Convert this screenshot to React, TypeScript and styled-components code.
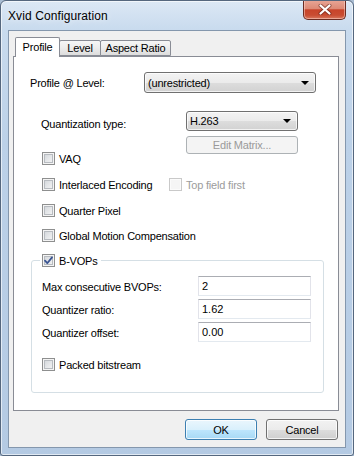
import React from "react";
import styled, { createGlobalStyle } from "styled-components";

const GlobalStyle = createGlobalStyle`
  html, body { margin: 0; padding: 0; background: #a9bdd3; }
  body { font-family: "Liberation Sans", Arial, sans-serif; font-size: 11px; color: #000; }
  * { box-sizing: border-box; }
`;

const Window = styled.div`
  width: 354px;
  height: 456px;
  display: flex;
  flex-direction: column;
  background: linear-gradient(180deg, #dce8f5 0px, #c9dbee 28px, #bcd1e8 140px, #b4cae3 456px);
  border: 1px solid #55677e;
  border-radius: 6px 6px 3px 3px;
  overflow: hidden;
  box-shadow: inset 0 0 0 1px rgba(255, 255, 255, 0.6);
`;

const TitleBar = styled.div`
  height: 29px;
  flex: none;
  display: flex;
  align-items: center;
  padding-left: 7px;
`;

const Title = styled.span`
  font-size: 12px;
  letter-spacing: 0.1px;
  color: #000;
  text-shadow: 0 0 6px rgba(255, 255, 255, 0.9);
`;

const CloseButton = styled.div`
  margin-left: auto;
  margin-right: 7px;
  align-self: flex-start;
  margin-top: -1px;
  width: 43px;
  height: 20px;
  display: flex;
  align-items: center;
  justify-content: center;
  border: 1px solid #6b2c22;
  border-top: none;
  border-radius: 0 0 5px 5px;
  background: linear-gradient(180deg, #e9a797 0%, #dd8a76 45%, #c8442a 52%, #c94d32 80%, #d8785e 100%);
  box-shadow: inset 0 0 0 1px rgba(255, 220, 210, 0.5);
`;

const Client = styled.div`
  flex: 1;
  margin: 0 7px 7px 7px;
  background: #f0f0f0;
  border: 1px solid #8497ad;
  display: flex;
  flex-direction: column;
  padding: 6px 7px 0 4px;
`;

const TabStrip = styled.div`
  height: 19px;
  display: flex;
  align-items: flex-end;
  padding-left: 2px;
`;

const Tab = styled.div<{ $active?: boolean; $w: number }>`
  width: ${(p) => p.$w}px;
  height: ${(p) => (p.$active ? 20 : 16)}px;
  margin-bottom: ${(p) => (p.$active ? -1 : 0)}px;
  margin-left: ${(p) => (p.$active ? 0 : -1)}px;
  position: relative;
  z-index: ${(p) => (p.$active ? 1 : 0)};
  border: 1px solid #898c95;
  border-bottom: ${(p) => (p.$active ? "none" : "1px solid #898c95")};
  border-radius: 2px 2px 0 0;
  background: ${(p) =>
    p.$active ? "#ffffff" : "linear-gradient(180deg, #f6f6f6 0%, #ececec 50%, #dddddd 100%)"};
  display: flex;
  align-items: center;
  justify-content: center;
  padding-bottom: ${(p) => (p.$active ? 1 : 0)}px;
  white-space: nowrap;
  letter-spacing: -0.2px;
`;

const Panel = styled.div`
  width: 326px;
  height: 355px;
  background: #fff;
  border: 1px solid #898c95;
  display: flex;
  flex-direction: column;
`;

const Row = styled.div<{ $top: number; $left: number }>`
  display: flex;
  align-items: center;
  margin-top: ${(p) => p.$top}px;
  padding-left: ${(p) => p.$left}px;
`;

const Label = styled.span<{ $w: number; $dy?: number }>`
  width: ${(p) => p.$w}px;
  flex: none;
  white-space: nowrap;
  letter-spacing: -0.2px;
  padding-top: ${(p) => p.$dy ?? 0}px;
`;

const QuantRow = styled.div`
  display: flex;
  align-items: flex-start;
  margin-top: 18px;
  padding-left: 27px;
`;

const Stack = styled.div`
  display: flex;
  flex-direction: column;
  gap: 5px;
`;

const Combo = styled.div<{ $w: number; $h: number }>`
  width: ${(p) => p.$w}px;
  height: ${(p) => p.$h}px;
  border: 1px solid #707070;
  border-radius: 3px;
  background: linear-gradient(180deg, #f3f3f3 0%, #ebebeb 50%, #dddddd 51%, #d2d2d2 100%);
  box-shadow: inset 0 0 0 1px rgba(255, 255, 255, 0.7);
  display: flex;
  align-items: center;
  padding: 0 6px 0 3px;
  letter-spacing: -0.2px;
`;

const ComboText = styled.span`
  flex: 1;
`;

const Arrow = styled.span`
  width: 0;
  height: 0;
  border-left: 4px solid transparent;
  border-right: 4px solid transparent;
  border-top: 4px solid #000;
`;

const PushButton = styled.div<{ $w: number; $h: number; $variant: "default" | "normal" | "disabled" }>`
  width: ${(p) => p.$w}px;
  height: ${(p) => p.$h}px;
  border-radius: 3px;
  display: flex;
  align-items: center;
  justify-content: center;
  letter-spacing: -0.2px;
  border: 1px solid
    ${(p) => (p.$variant === "default" ? "#3c7fb1" : p.$variant === "disabled" ? "#adb2b5" : "#707070")};
  color: ${(p) => (p.$variant === "disabled" ? "#9a9a9a" : "#000")};
  background: ${(p) =>
    p.$variant === "default"
      ? "linear-gradient(180deg, #eaf6fd 0%, #d9f0fc 50%, #bee6fd 51%, #a7d9f5 100%)"
      : p.$variant === "disabled"
      ? "#f4f4f4"
      : "linear-gradient(180deg, #f2f2f2 0%, #ebebeb 50%, #dddddd 51%, #cfcfcf 100%)"};
  box-shadow: ${(p) =>
    p.$variant === "disabled" ? "none" : "inset 0 0 0 1px rgba(255, 255, 255, 0.75)"};
`;

const CheckRow = styled.div<{ $top: number }>`
  display: flex;
  align-items: center;
  margin-top: ${(p) => p.$top}px;
  padding-left: 28px;
  height: 13px;
`;

const CheckItem = styled.label<{ $w?: number; $disabled?: boolean }>`
  display: flex;
  align-items: center;
  gap: 4px;
  width: ${(p) => (p.$w ? `${p.$w}px` : "auto")};
  flex: none;
  white-space: nowrap;
  letter-spacing: -0.2px;
  color: ${(p) => (p.$disabled ? "#9c9c9c" : "#000")};
`;

const Box = styled.span<{ $disabled?: boolean }>`
  width: 13px;
  height: 13px;
  flex: none;
  display: flex;
  align-items: center;
  justify-content: center;
  border: 1px solid ${(p) => (p.$disabled ? "#c9c9c9" : "#8e8f8f")};
  background: ${(p) =>
    p.$disabled ? "#f5f5f5" : "linear-gradient(135deg, #cdd1d6 0%, #e6e8ea 55%, #f7f7f7 100%)"};
  box-shadow: ${(p) =>
    p.$disabled
      ? "inset 0 0 0 1px #fbfbfb"
      : "inset 0 0 0 1px #f4f4f4, inset 0 0 0 2px #b7bbc0"};
`;

const Group = styled.div`
  margin: 18px 0 0 17px;
  width: 293px;
  border: 1px solid #d5dfe5;
  border-radius: 3px;
  display: flex;
  flex-direction: column;
  padding: 0 0 21px 10px;
`;

const Legend = styled.div`
  margin: -7px 0 0 -2px;
  align-self: flex-start;
  background: #fff;
  padding: 0 3px 0 2px;
  height: 13px;
  display: flex;
  align-items: center;
`;

const FieldGrid = styled.div`
  display: grid;
  grid-template-columns: 156px 113px;
  grid-auto-rows: 20px;
  row-gap: 3px;
  margin-top: 9px;
  align-items: center;
`;

const Edit = styled.div`
  height: 20px;
  background: #fff;
  border: 1px solid #e2e3ea;
  border-top-color: #abadb3;
  border-bottom-color: #e3e9ef;
  display: flex;
  align-items: center;
  padding: 0 3px;
`;

const GroupCheck = styled.div`
  margin-top: 16px;
  height: 13px;
  display: flex;
  align-items: center;
`;

const ButtonRow = styled.div`
  display: flex;
  justify-content: flex-end;
  gap: 9px;
  margin-top: 8px;
`;

const CheckMark = () => (
  <svg width="9" height="9" viewBox="0 0 9 9">
    <path d="M1 4.6 L3.3 7.2 L8 1.4" fill="none" stroke="#3b5592" strokeWidth="1.8" strokeLinecap="round" strokeLinejoin="round" />
  </svg>
);

const CloseGlyph = () => (
  <svg width="14" height="11" viewBox="0 0 14 11">
    <path d="M2.5 1.5 L11.5 9.5 M11.5 1.5 L2.5 9.5" stroke="#5a1d14" strokeWidth="4" strokeLinecap="round" opacity="0.55" />
    <path d="M2.5 1.5 L11.5 9.5 M11.5 1.5 L2.5 9.5" stroke="#ffffff" strokeWidth="2.2" strokeLinecap="round" />
  </svg>
);

const Check = ({ label, checked, disabled, w }: { label: string; checked?: boolean; disabled?: boolean; w?: number }) => (
  <CheckItem $w={w} $disabled={disabled}>
    <Box $disabled={disabled}>{checked ? <CheckMark /> : null}</Box>
    <span>{label}</span>
  </CheckItem>
);

export default function App() {
  return (
    <>
      <GlobalStyle />
      <Window>
        <TitleBar>
          <Title>Xvid Configuration</Title>
          <CloseButton>
            <CloseGlyph />
          </CloseButton>
        </TitleBar>
        <Client>
          <TabStrip>
            <Tab $active $w={45}>Profile</Tab>
            <Tab $w={42}>Level</Tab>
            <Tab $w={71}>Aspect Ratio</Tab>
          </TabStrip>
          <Panel>
            <Row $top={15} $left={16}>
              <Label $w={114} $dy={1}>Profile @ Level:</Label>
              <Combo $w={172} $h={21}>
                <ComboText>(unrestricted)</ComboText>
                <Arrow />
              </Combo>
            </Row>
            <QuantRow>
              <Label $w={145} $dy={7}>Quantization type:</Label>
              <Stack>
                <Combo $w={112} $h={20}>
                  <ComboText>H.263</ComboText>
                  <Arrow />
                </Combo>
                <PushButton $w={112} $h={18} $variant="disabled">Edit Matrix...</PushButton>
              </Stack>
            </QuantRow>
            <CheckRow $top={-2}>
              <Check label="VAQ" />
            </CheckRow>
            <CheckRow $top={13}>
              <Check label="Interlaced Encoding" w={127} />
              <Check label="Top field first" disabled />
            </CheckRow>
            <CheckRow $top={13}>
              <Check label="Quarter Pixel" />
            </CheckRow>
            <CheckRow $top={12}>
              <Check label="Global Motion Compensation" />
            </CheckRow>
            <Group>
              <Legend>
                <Check label="B-VOPs" checked />
              </Legend>
              <FieldGrid>
                <Label $w={156} $dy={2}>Max consecutive BVOPs:</Label>
                <Edit>2</Edit>
                <Label $w={156} $dy={2}>Quantizer ratio:</Label>
                <Edit>1.62</Edit>
                <Label $w={156} $dy={2}>Quantizer offset:</Label>
                <Edit>0.00</Edit>
              </FieldGrid>
              <GroupCheck>
                <Check label="Packed bitstream" />
              </GroupCheck>
            </Group>
          </Panel>
          <ButtonRow>
            <PushButton $w={72} $h={21} $variant="default">OK</PushButton>
            <PushButton $w={72} $h={21} $variant="normal">Cancel</PushButton>
          </ButtonRow>
        </Client>
      </Window>
    </>
  );
}
